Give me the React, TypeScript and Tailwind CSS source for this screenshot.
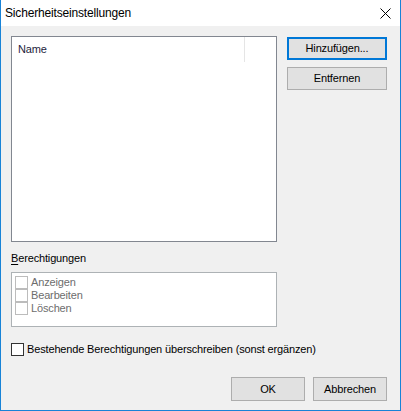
import React from 'react';

const FONT = "font-['Liberation_Sans',Arial,sans-serif]";

function WinButton({ label, primary = false }: { label: string; primary?: boolean }) {
    return (
        <button
            className={
                'flex h-[23px] w-[100px] items-center justify-center bg-[#e1e1e1] text-[11px] tracking-[-0.15px] text-black ' +
                (primary ? 'border-2 border-[#0078d7]' : 'border border-[#adadad]')
            }
        >
            {label}
        </button>
    );
}

function Check({ label, disabled = false }: { label: string; disabled?: boolean }) {
    return (
        <div className="flex h-[13px] items-center gap-[3px]">
            <span
                className={
                    'block h-[13px] w-[13px] shrink-0 bg-white border ' +
                    (disabled ? 'border-[#bcbcbc]' : 'border-[#333333]')
                }
            />
            <span className={'text-[11px] leading-[13px] tracking-[-0.15px] ' + (disabled ? 'text-[#6d6d6d]' : 'text-black')}>
                {label}
            </span>
        </div>
    );
}

export default function App() {
    return (
        <div className={'flex h-[411px] w-[401px] flex-col border-x border-b border-[#1883d7] ' + FONT}>
            {/* title bar */}
            <div className="flex h-[26px] shrink-0 items-center justify-between bg-white pl-[4px] pr-[9px]">
                <span className="text-[12px] tracking-[-0.17px] text-black">Sicherheitseinstellungen</span>
                <svg width="11" height="11" viewBox="0 0 11 11">
                    <path d="M0.5 0.5 L10.5 10.5 M10.5 0.5 L0.5 10.5" stroke="#000" strokeWidth="1" />
                </svg>
            </div>

            <div className="flex flex-1 flex-col bg-[#f0f0f0] pl-[10px] pr-[13px] pt-[10px] text-[11px] tracking-[-0.15px]">
                <div className="flex gap-[10px]">
                    {/* list view */}
                    <div className="h-[206px] w-[266px] border border-[#828790] bg-white">
                        <div className="flex h-[25px]">
                            <div className="flex w-[232px] items-center pl-[6px] text-[#1e1e3c]">Name</div>
                            <div className="w-px bg-[#e5e5e5]" />
                        </div>
                    </div>
                    <div className="flex flex-col gap-[7px] pt-[1px]">
                        <WinButton label="Hinzufügen..." primary />
                        <WinButton label="Entfernen" />
                    </div>
                </div>

                <div className="mt-[9px] leading-[14px] text-black">
                    <span className="underline underline-offset-2">B</span>erechtigungen
                </div>

                <div className="mt-[7px] flex h-[55px] w-[266px] flex-col border border-[#adb2b5] bg-white px-[3px] pt-[3px]">
                    <Check label="Anzeigen" disabled />
                    <Check label="Bearbeiten" disabled />
                    <Check label="Löschen" disabled />
                </div>

                <div className="mt-[16px]">
                    <Check label="Bestehende Berechtigungen überschreiben (sonst ergänzen)" />
                </div>

                <div className="mt-[21px] flex justify-end gap-[8px]">
                    <button className="flex h-[24px] w-[74px] items-center justify-center border border-[#adadad] bg-[#e1e1e1]">OK</button>
                    <button className="flex h-[24px] w-[74px] items-center justify-center border border-[#adadad] bg-[#e1e1e1]">Abbrechen</button>
                </div>
            </div>
        </div>
    );
}
